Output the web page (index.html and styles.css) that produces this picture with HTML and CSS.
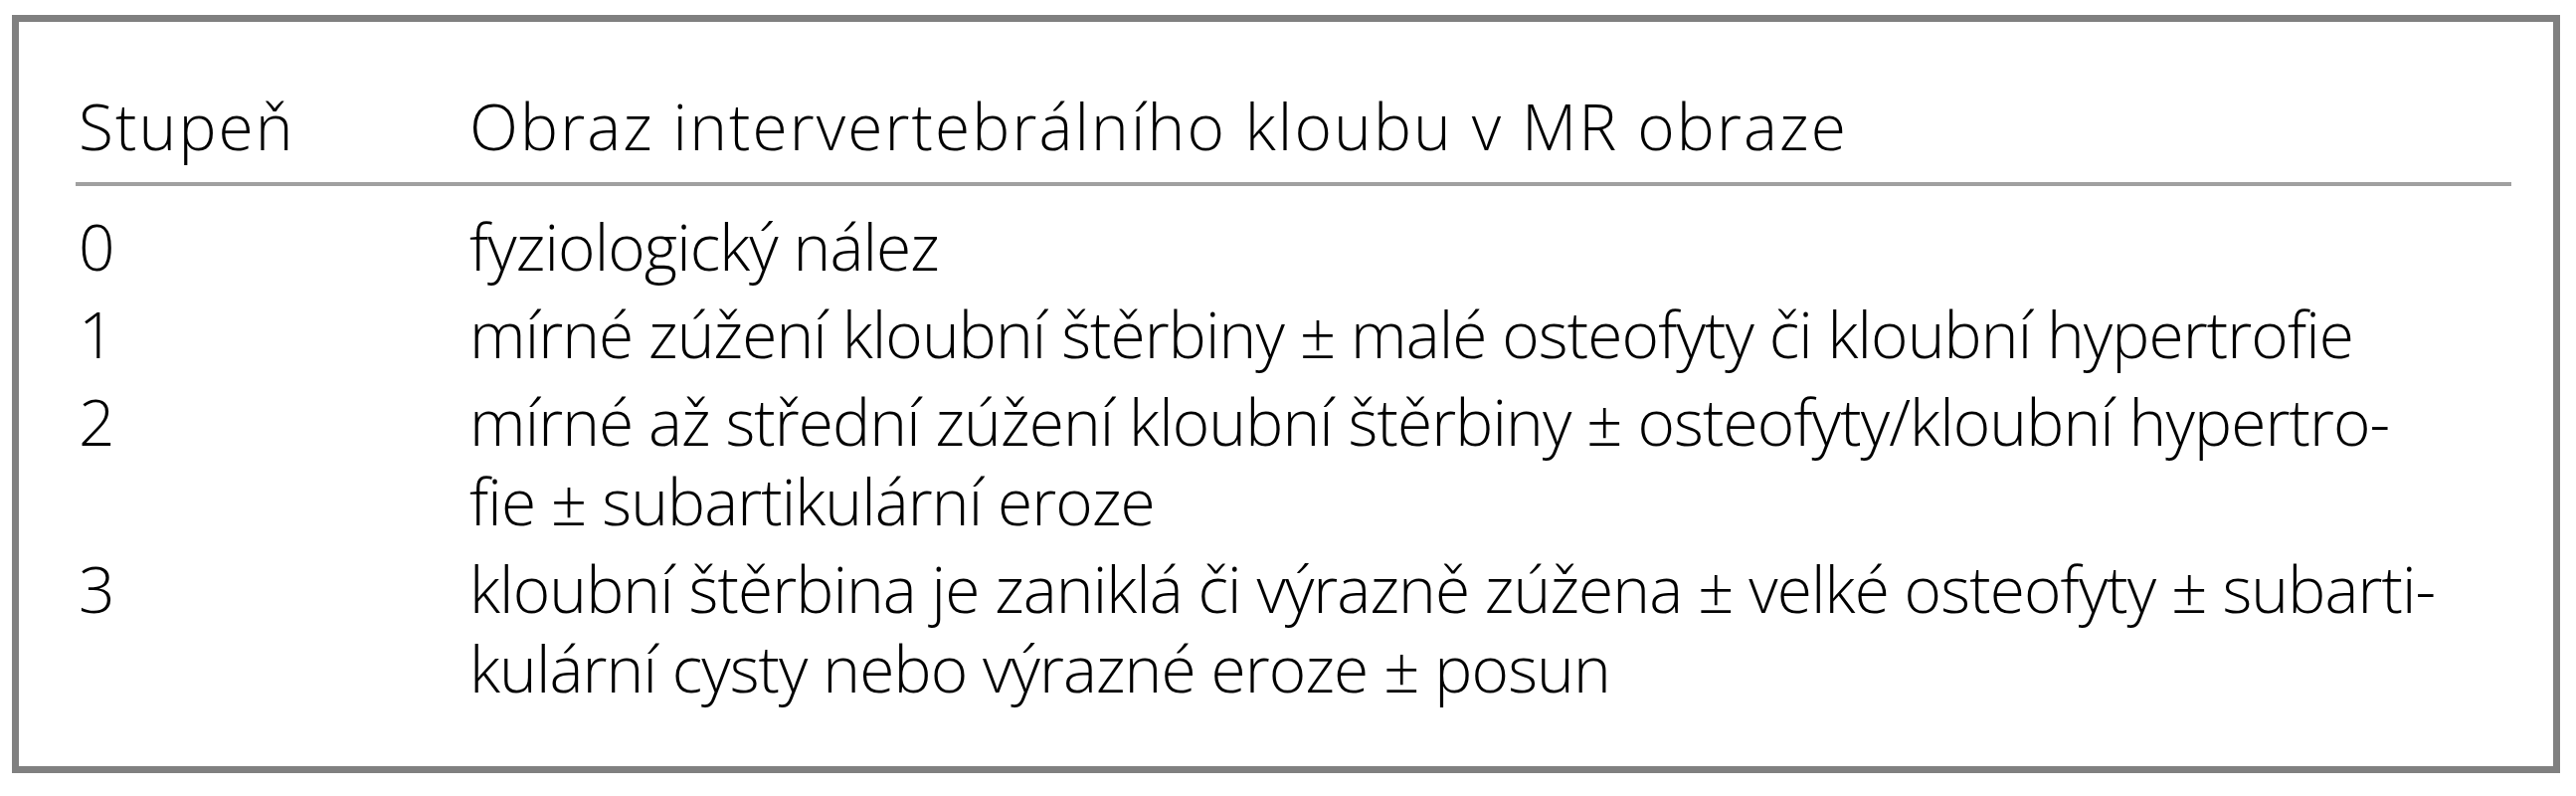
FILE: index.html
```html
<!DOCTYPE html>
<html lang="cs">
<head>
<meta charset="utf-8">
<title>Stupeň</title>
<link rel="stylesheet" href="styles.css">
</head>
<body>
<div class="frame">
  <table class="grades">
    <thead>
      <tr>
        <th class="col-grade">Stupeň</th>
        <th class="col-desc">Obraz intervertebrálního kloubu v MR obraze</th>
      </tr>
    </thead>
    <tbody>
      <tr class="first">
        <td class="col-grade">0</td>
        <td class="col-desc">fyziologický nález</td>
      </tr>
      <tr>
        <td class="col-grade">1</td>
        <td class="col-desc">mírné zúžení kloubní štěrbiny ± malé osteofyty či kloubní hypertrofie</td>
      </tr>
      <tr>
        <td class="col-grade">2</td>
        <td class="col-desc"><span class="ln">mírné až střední zúžení kloubní štěrbiny ± osteofyty/kloubní hypertro-</span><span class="ln">fie ± subartikulární eroze</span></td>
      </tr>
      <tr>
        <td class="col-grade">3</td>
        <td class="col-desc"><span class="ln">kloubní štěrbina je zaniklá či výrazně zúžena ± velké osteofyty ± subarti-</span><span class="ln">kulární cysty nebo výrazné eroze ± posun</span></td>
      </tr>
    </tbody>
  </table>
</div>
</body>
</html>
```

FILE: styles.css
```css
html, body {
  margin: 0;
  padding: 0;
  background: #ffffff;
}

body {
  font-family: "Open Sans", "Noto Sans", "Liberation Sans", sans-serif;
  font-weight: 340;
  color: #000000;
}

.frame {
  box-sizing: border-box;
  width: 2562px;
  height: 762px;
  margin: 15px 0 0 12px;
  border: 7px solid #808080;
  padding: 65px 42px 0 57px;
}

.grades {
  width: 100%;
  border-collapse: collapse;
  font-size: 64px;
  line-height: 80px;
}

.grades th {
  font-weight: 340;
  letter-spacing: 2.1px;
  text-align: left;
  padding: 0 0 16px 0;
  border-bottom: 4px solid #a0a0a0;
  white-space: nowrap;
}

.grades td {
  padding: 4px 0;
  vertical-align: top;
  white-space: nowrap;
  letter-spacing: -0.9px;
}

.grades tr.first td {
  padding-top: 21px;
}

.grades th.col-grade,
.grades td.col-grade {
  width: 393px;
  padding-left: 3px;
}

.ln {
  display: block;
}
```
